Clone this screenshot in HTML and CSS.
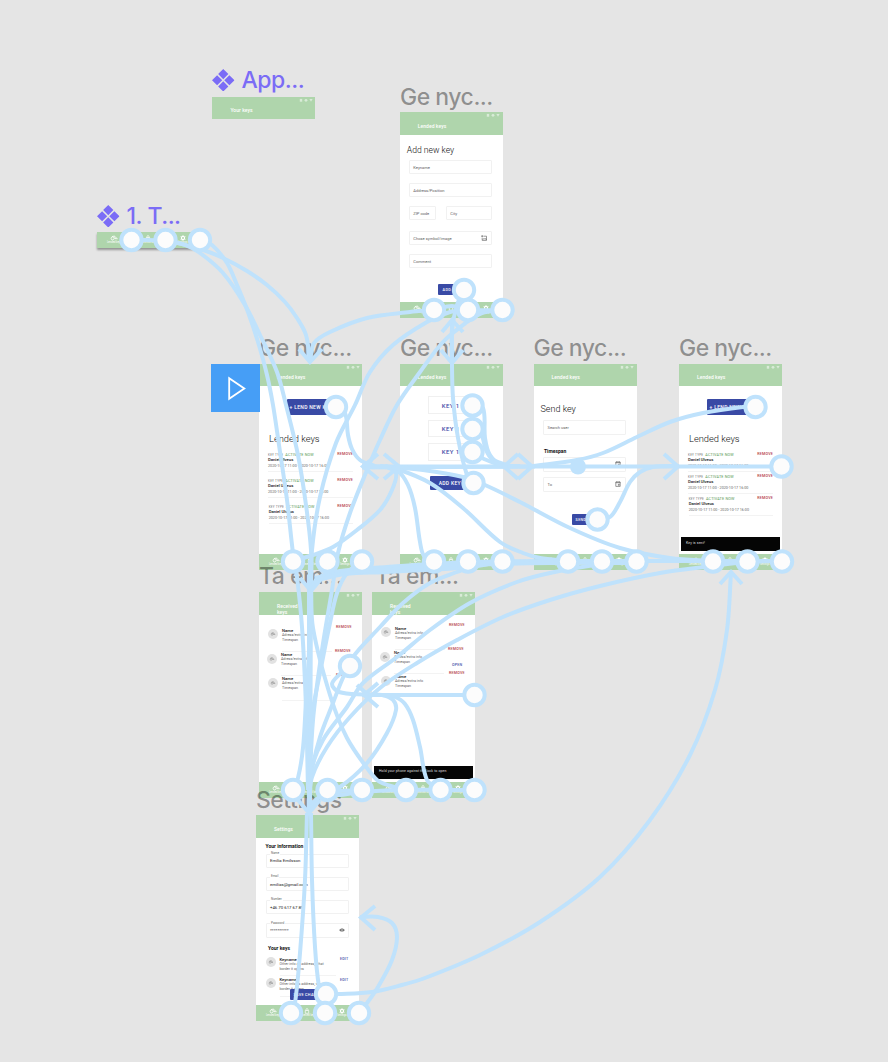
FILE: index.html
```html
<!DOCTYPE html>
<html lang="sv">
<head>
<meta charset="utf-8">
<title>Prototype canvas</title>
<link rel="stylesheet" href="styles.css">
</head>
<body>
<svg class="defs" width="0" height="0">
  <symbol id="status" viewBox="0 0 14 5"><rect x=".8" y=".9" width="2.400" height="2.800"/><circle cx="7" cy="2.300" r="1.400"/><path d="M10.400 1h3.200l-1.600 2.700z"/></symbol>
  <symbol id="key" viewBox="0 0 8 6"><circle cx="2.600" cy="3.400" r="1.500" fill="none" stroke="currentColor" stroke-width=".8"/><path d="M2 1.600L4.600 1l.6 1.200M4 3h3v1.300M5.700 3v1.200" fill="none" stroke="currentColor" stroke-width=".8"/></symbol>
  <symbol id="lock" viewBox="0 0 8 6"><path d="M2.300 2.500h3.400v2.800H2.300zM3 2.500V1.600a1 1 0 0 1 2 0v.9" fill="none" stroke="currentColor" stroke-width=".7"/></symbol>
  <symbol id="gear" viewBox="0 0 8 6"><circle cx="4" cy="3" r="1.600" fill="none" stroke="currentColor" stroke-width="1.200"/><path d="M4 .2v.8M4 5v.8M1.600 1.600l.5.5M6.400 1.600l-.5.5M1.600 4.400l.5-.5M6.400 4.400l-.5-.5" stroke="currentColor" stroke-width=".8"/></symbol>
  <symbol id="cal" viewBox="0 0 6 6"><path d="M.8 1h4.400v4.400H.8zM.8 1.700h4.400M1.800.3v.8M4.200.3v.8M3.300 3.300h1v1h-1z" fill="none" stroke="#555" stroke-width=".6"/></symbol>
  <symbol id="img" viewBox="0 0 6 6"><path d="M2.500 1.200h3v4.200H1.200V2.800M.2 1.200h2M1.200.2v2M1.800 4.800l1.200-1.500 1 1 .6-.8.800 1.300" fill="none" stroke="#555" stroke-width=".6"/></symbol>
  <symbol id="eye" viewBox="0 0 6 6"><path d="M.3 3C1.500.900 4.500.900 5.700 3 4.500 5.100 1.500 5.100.3 3z" fill="#555"/><circle cx="3" cy="3" r="1.100" fill="#555" stroke="#fff" stroke-width=".5"/></symbol>
  <symbol id="component" viewBox="0 0 22 22"><path d="M11 0l5 5-5 5-5-5zM11 12l5 5-5 5-5-5zM5 6l5 5-5 5-5-5zM17 6l5 5-5 5-5-5z" fill="#7b6cf6"/></symbol>
</svg>

<main class="canvas">
  <div class="comp at-app"><div class="bar"><svg class="status"><use href="#status"/></svg><b>Your keys</b></div></div>
  <div class="comp at-tab"><div class="nav"><i><svg><use href="#key"/></svg>Lended keys</i><i><svg><use href="#lock"/></svg>Received keys</i><i><svg><use href="#gear"/></svg>Settings</i></div></div>

  <section class="phone at-add">
    <div class="bar"><svg class="status"><use href="#status"/></svg><b>Lended keys</b></div>
    <div class="form">
      <h2>Add new key</h2>
      <div class="field">Keyname</div>
      <div class="field">Address/Position</div>
      <div class="pair"><div class="field zip">ZIP code</div><div class="field">City</div></div>
      <div class="field wide-gap">Chose symbol/image<svg><use href="#img"/></svg></div>
      <div class="field">Comment</div>
      <div class="btn small add-btn">ADD KEY</div>
    </div>
    <div class="nav"><i><svg><use href="#key"/></svg>Lended keys</i><i><svg><use href="#lock"/></svg>Received keys</i><i><svg><use href="#gear"/></svg>Settings</i></div>
  </section>

  <section class="phone at-lend">
    <div class="bar"><svg class="status"><use href="#status"/></svg><b>Lended keys</b></div>
    <div class="btn lend-btn">+ LEND NEW KEY</div>
    <h2 class="list-title">Lended keys</h2>
    <div class="rows">
      <div class="row"><p><small>KEY TYPE</small><em>ACTIVATE NOW</em><u>REMOVE</u></p><strong>Daniel Ulveus</strong><span>2020-10-17 11:00 - 2020-10-17 16:00</span></div>
      <div class="row"><p><small>KEY TYPE</small><em>ACTIVATE NOW</em><u>REMOVE</u></p><strong>Daniel Ulveus</strong><span>2020-10-17 11:00 - 2020-10-17 16:00</span></div>
      <div class="row shift"><p><small>KEY TYPE</small><em>ACTIVATE NOW</em><u>REMOVE</u></p><strong>Daniel Ulveus</strong><span>2020-10-17 11:00 - 2020-10-17 16:00</span></div>
    </div>
    <div class="nav"><i><svg><use href="#key"/></svg>Lended keys</i><i><svg><use href="#lock"/></svg>Received keys</i><i><svg><use href="#gear"/></svg>Settings</i></div>
  </section>

  <section class="phone at-pick">
    <div class="bar"><svg class="status"><use href="#status"/></svg><b>Lended keys</b></div>
    <div class="keys"><div>KEY 1</div><div>KEY 1</div><div>KEY 1</div></div>
    <div class="btn addkey-btn">ADD KEY</div>
    <div class="nav"><i><svg><use href="#key"/></svg>Lended keys</i><i><svg><use href="#lock"/></svg>Received keys</i><i><svg><use href="#gear"/></svg>Settings</i></div>
  </section>

  <section class="phone at-send">
    <div class="bar"><svg class="status"><use href="#status"/></svg><b>Lended keys</b></div>
    <div class="send">
      <h2>Send key</h2>
      <div class="field">Search user</div>
      <h3>Timespan</h3>
      <div class="field">From<svg><use href="#cal"/></svg></div>
      <div class="field to">To<svg><use href="#cal"/></svg></div>
      <div class="btn small send-btn">SEND</div>
    </div>
    <div class="nav"><i><svg><use href="#key"/></svg>Lended keys</i><i><svg><use href="#lock"/></svg>Received keys</i><i><svg><use href="#gear"/></svg>Settings</i></div>
  </section>

  <section class="phone at-sent">
    <div class="bar"><svg class="status"><use href="#status"/></svg><b>Lended keys</b></div>
    <div class="btn lend-btn">+ LEND NEW KEY</div>
    <h2 class="list-title">Lended keys</h2>
    <div class="rows tight">
      <div class="row"><p><small>KEY TYPE</small><em>ACTIVATE NOW</em><u>REMOVE</u></p><strong>Daniel Ulveus</strong><span>2020-10-17 11:00 - 2020-10-17 16:00</span></div>
      <div class="row"><p><small>KEY TYPE</small><em>ACTIVATE NOW</em><u>REMOVE</u></p><strong>Daniel Ulveus</strong><span>2020-10-17 11:00 - 2020-10-17 16:00</span></div>
      <div class="row shift"><p><small>KEY TYPE</small><em>ACTIVATE NOW</em><u>REMOVE</u></p><strong>Daniel Ulveus</strong><span>2020-10-17 11:00 - 2020-10-17 16:00</span></div>
    </div>
    <div class="snack">Key is sent!</div>
    <div class="nav"><i><svg><use href="#key"/></svg>Lended keys</i><i><svg><use href="#lock"/></svg>Received keys</i><i><svg><use href="#gear"/></svg>Settings</i></div>
  </section>

  <section class="phone at-recv">
    <div class="bar two"><svg class="status"><use href="#status"/></svg><b>Received<br>keys</b></div>
    <div class="people">
      <div class="person"><svg class="ava"><use href="#key"/></svg><p><strong>Name</strong><span>Adress/extra info</span><span>Timespan</span></p><u>REMOVE</u></div>
      <div class="person back"><svg class="ava"><use href="#key"/></svg><p><strong>Name</strong><span>Adress/extra info</span><span>Timespan</span></p><u>REMOVE</u></div>
      <div class="person"><svg class="ava"><use href="#key"/></svg><p><strong>Name</strong><span>Adress/extra info</span><span>Timespan</span></p><u>REMOVE</u></div>
    </div>
    <div class="nav"><i><svg><use href="#key"/></svg>Lended keys</i><i><svg><use href="#lock"/></svg>Received keys</i><i><svg><use href="#gear"/></svg>Settings</i></div>
  </section>

  <section class="phone at-open">
    <div class="bar two"><svg class="status"><use href="#status"/></svg><b>Received<br>keys</b></div>
    <div class="people raised">
      <div class="person"><svg class="ava"><use href="#key"/></svg><p><strong>Name</strong><span>Adress/extra info</span><span>Timespan</span></p><u>REMOVE</u></div>
      <div class="person back"><svg class="ava"><use href="#key"/></svg><p><strong>Name</strong><span>Adress/extra info</span><span>Timespan</span></p><u>REMOVE<a>OPEN</a></u></div>
      <div class="person plain"><svg class="ava"><use href="#key"/></svg><p><strong>Name</strong><span>Adress/extra info</span><span>Timespan</span></p><u>REMOVE</u></div>
    </div>
    <div class="snack">Hold your phone against the lock to open</div>
    <div class="nav"><i><svg><use href="#key"/></svg>Lended keys</i><i><svg><use href="#lock"/></svg>Received keys</i><i><svg><use href="#gear"/></svg>Settings</i></div>
  </section>

  <section class="phone at-set">
    <div class="bar"><svg class="status"><use href="#status"/></svg><b>Settings</b></div>
    <div class="info">
      <h3>Your information</h3>
      <div class="field val"><label>Name</label>Emilia Emilsson</div>
      <div class="field val"><label>Email</label>emilias@gmail.com</div>
      <div class="field val"><label>Number</label>+46 70 617 67 89</div>
      <div class="field val"><label>Password</label>**********<svg><use href="#eye"/></svg></div>
      <h3 class="sub">Your keys</h3>
      <div class="mine"><svg class="ava"><use href="#key"/></svg><p><strong>Keyname</strong><span>Other info as address, what<br>border it opens</span></p><a>EDIT</a></div>
      <div class="mine"><svg class="ava"><use href="#key"/></svg><p><strong>Keyname</strong><span>Other info as address, what<br>border it opens</span></p><a>EDIT</a></div>
    </div>
    <div class="btn small save-btn">SAVE CHANGES</div>
    <div class="nav"><i><svg><use href="#key"/></svg>Lended keys</i><i><svg><use href="#lock"/></svg>Received keys</i><i><svg><use href="#gear"/></svg>Settings</i></div>
  </section>

  <div class="title comp-title t-app"><svg><use href="#component"/></svg>App...</div>
  <div class="title comp-title t-tab"><svg><use href="#component"/></svg>1. T...</div>
  <div class="title t-add">Ge nyc...</div>
  <div class="title t-lend">Ge nyc...</div>
  <div class="title t-pick">Ge nyc...</div>
  <div class="title t-send">Ge nyc...</div>
  <div class="title t-sent">Ge nyc...</div>
  <div class="title t-recv">Ta em...</div>
  <div class="title t-open">Ta em...</div>
  <div class="title t-set">Settings</div>

  <div class="play"><svg viewBox="0 0 48 48"><path d="M18 14v20.500L33 24.300z" fill="none" stroke="#fff" stroke-width="1.800"/></svg></div>
  <svg class="flow" id="flow" viewBox="0 0 888 1062"></svg>
</main>
<script src="flow.js"></script>
</body>
</html>
```

FILE: flow.js
```js
// Connector routes, each a list of x,y points joined by a smooth curve.
const routes = [
  "131,240 166,241 200,249 223,258 247,271 267,285 285,302 297,318 306,335 310,362",
  "165,240 185,245 200,253 223,273 245,305 260,335 277,372 286,405 298,455 306,505 311,550 311,590",
  "200,240 212,245 227,263 237,285 248,312 258,342 267,375 273,405 279,445 287,500 293,553 297,577 302,627 306,707 308,790",
  "434,310 410,312 367,318 330,332 314,343 310,362",
  "464,290 457,305 452,330 452,362",
  "473,483 467,475 458,438 453,398 452,365 452,320",
  "468,310 450,312 427,322 393,345 370,372 355,405 336,443 320,497 312,550 311,590",
  "502,310 482,313 467,322 443,342 420,372 397,405 380,440 367,470 350,513 338,553 332,590 322,650 313,720 309,800",
  "336,407 345,413 348,435 352,449 360,460 375,466",
  "362,466.500 782,466.500", "362,467.500 535,466.500",
  "472,405 483,408 485,438 490,455 502,465 520,466", "472,429 481,434 486,450 492,459 506,465", "472,452 484,459 500,465",
  "362,466 390,467 423,470 463,477 485,485 520,502 570,528 620,548 670,558 713,561",
  "380,466 397,469 430,483 463,508 500,542 523,553 540,558 568,561",
  "385,466 397,470 408,485 415,508 420,542 424,556 434,561",
  "385,466 396,473 392,490 380,510 357,530 333,547 313,555 293,561",
  "755,407 743,407 703,413 670,422 637,437 603,453 577,460 533,466",
  "597,519 610,517 620,502 630,482 640,472 653,467 679,466",
  "782,561 568,561 470,562 387,567 340,571 318,578 311,590",
  "636,563 550,563 470,565 387,570 340,574 315,578",
  "502,561 470,567 387,572 345,574 318,580",
  "502,561 480,564 457,572 430,583 403,603 380,627 353,657 342,680 333,703 320,737 312,770 309,800",
  "636,561 602,564 550,573 517,582 470,603 430,630 397,657 363,683 347,707 323,740 310,773 309,800",
  "782,561 747,562 713,566 660,573 600,586 550,600 503,617 457,640 417,663 380,688 350,717 327,747 312,777 309,800",
  "362,561 347,573 337,593 330,623 320,673 311,723 309,800",
  "293,790 298,778 303,748 306,700 309,650 310,560",
  "406,790 380,782 370,772 347,738 330,695 313,628 311,585",
  "309,575 309,812", "311,590 310,812",
  "327,790 340,787 367,763 387,733 396,710 393,700 382,695 362,695",
  "440,790 427,780 420,747 413,720 405,704 395,697 383,695",
  "474,695 362,695", "350,666 340,674 332,684 339,692 367,695",
  "475,790 397,790 362,792 340,795 318,798 309,810", "362,790 327,793 312,803",
  "307,813 305,880 300,953 295,1003 291,1013",
  "311,813 312,880 315,947 319,987 325,1013",
  "326,994 338,994 372,992 402,985 425,978 480,955 540,922 600,877 650,820 690,755 715,690 727,630 731,573",
  "359,1013 367,1003 378,987 392,960 397,937 392,923 378,917 360,917",
  "434,310 452,306 468,310 502,310"
];
const heads = [
  "299,349 310,362 322,349", "442,332 452,320 463,332", "441,350 452,363 463,350",
  "378,454 363,466.500 378,479", "384,454 399,466.500 384,479", "518,454 504,466.500 518,479",
  "518,454 532,466.500 518,479", "664,454 678,466.500 664,479",
  "300,578 311,591 322,578", "298,800 309,813 320,800",
  "378,683 364,695 378,707", "357,685 368,695",
  "720,584 731,572 742,584", "375,906 361,917.500 375,930"
];
const nodes = [
  [131.5,240],[165.5,240],[200,240],[464,290],[434,310],[468,310],[502.5,310],
  [336,407],[293,561.5],[327.5,561.5],[362,561.5],[472.5,405.5],[472.5,429],[472.5,452],[473.5,483],
  [434,561.5],[468,561.5],[502.5,561.5],[597.5,519.5],[568,561.5],[602,561.5],[636.5,561.5],
  [755.5,407],[781.5,466.5],[713,561.5],[747.5,561.5],[782,561.5],
  [350,666],[293,790],[327.5,790],[362,790],[474.5,695],[406,790],[440.5,790],[474.5,790],
  [326,994],[291,1013],[325,1013],[359,1013]
];
const parse = s => s.split(" ").map(p => p.split(",").map(Number));
function smooth(p) {
  let d = "M" + p[0];
  for (let i = 0; i < p.length - 1; i++) {
    const a = p[i - 1] || p[i], b = p[i], c = p[i + 1], e = p[i + 2] || c;
    const len = (m, n) => Math.hypot(m[0] - n[0], m[1] - n[1]);
    const s = len(b, c), kb = s / (len(a, b) + s) / 1.5, kc = s / (len(c, e) + s) / 1.5;
    d += "C" + [b[0] + (c[0] - a[0]) * kb / 2, b[1] + (c[1] - a[1]) * kb / 2,
      c[0] - (e[0] - b[0]) * kc / 2, c[1] - (e[1] - b[1]) * kc / 2, c[0], c[1]].join(" ");
  }
  return d;
}
document.getElementById("flow").innerHTML =
  routes.map(r => `<path d="${smooth(parse(r))}"/>`).join("") +
  heads.map(h => `<polyline points="${h}"/>`).join("") +
  '<circle class="dot" cx="578" cy="466.5" r="8"/>' +
  nodes.map(n => `<circle cx="${n[0]}" cy="${n[1]}" r="10.200"/>`).join("");
```

FILE: styles.css
```css
* { box-sizing: border-box; }
body { margin: 0; background: #e5e5e5; font-family: Roboto, sans-serif; }
p, h2, h3 { margin: 0; }
.defs { position: absolute; }
.canvas { position: relative; width: 888px; height: 1062px; overflow: hidden; background: #e5e5e5; }
.flow { position: absolute; inset: 0; width: 888px; height: 1062px; fill: none; stroke: #bfe2fc; stroke-width: 4; }
.flow circle { fill: #fcfcfc; }
.flow .dot { fill: #bfe2fc; stroke: none; }

/* frame titles */
.title { position: absolute; font: 450 23px/30px Inter, sans-serif; letter-spacing: -.5px; color: rgba(0,0,0,.39); white-space: nowrap; }
.comp-title { display: flex; align-items: center; gap: 7px; color: #7b6cf6; }
.comp-title svg { width: 22.500px; height: 22.500px; }
.t-app { left: 212px; top: 65px; }
.t-tab { left: 97px; top: 201px; }
.t-add { left: 400px; top: 81.500px; }
.t-lend { left: 259px; top: 332.500px; }
.t-pick { left: 400px; top: 332.500px; }
.t-send { left: 533.5px; top: 332.500px; }
.t-sent { left: 679px; top: 332.500px; }
.t-recv { left: 259px; top: 561px; }
.t-open { left: 375px; top: 561px; }
.t-set { left: 256px; top: 784.500px; }
.play { position: absolute; left: 211px; top: 364px; width: 48.5px; height: 48px; background: #469ef6; }
.play svg { display: block; }

/* frames */
.phone { position: absolute; width: 103px; height: 206px; display: flex; flex-direction: column; background: #fff; overflow: hidden; }
.comp { position: absolute; width: 103px; }
.at-app { left: 212.4px; top: 96.500px; }
.at-tab { left: 97px; top: 232.4px; box-shadow: 0 1.5px 2px rgba(0,0,0,.35); }
.at-add { left: 399.8px; top: 112.4px; }
.at-lend { left: 259px; top: 363.600px; }
.at-pick { left: 399.8px; top: 363.600px; }
.at-send { left: 533.5px; top: 363.600px; }
.at-sent { left: 679px; top: 363.600px; }
.at-recv { left: 259px; top: 592px; }
.at-open { left: 372px; top: 592px; }
.at-set { left: 256px; top: 815px; }

.bar { flex: none; height: 22.8px; background: #afd5ac; color: #fff; display: flex; flex-direction: column; font-size: 5px; line-height: 6px; }
.status { width: 14px; height: 5px; margin: 1px 2.500px 0 auto; fill: #d9ebd8; }
.bar b { margin: 4.500px 0 0 18px; font-weight: 500; letter-spacing: .05px; }
.nav { flex: none; height: 16px; margin-top: auto; background: #afd5ac; color: #fff; display: flex; }
.nav i { flex: 1; display: flex; flex-direction: column; align-items: center; padding-top: 3px; font-style: normal; font-size: 2.6px; line-height: 3px; white-space: nowrap; }
.nav svg { width: 8px; height: 6px; }

h2 { font-weight: 300; font-size: 9.300px; line-height: 11px; color: #111; white-space: nowrap; }
h3 { font-weight: 700; font-size: 5px; line-height: 6px; color: #111; white-space: nowrap; }
.btn { flex: none; background: #394aa5; color: #fff; border-radius: 1px; font-weight: 500; font-size: 5px; letter-spacing: .3px; display: flex; align-items: center; justify-content: center; white-space: nowrap; }
.small { height: 10.5px; font-size: 3.8px; }
.field { display: flex; align-items: center; justify-content: space-between; height: 14.5px; padding: 0 3.500px; border: 1px solid #f1f1f1; border-radius: 1px; font-size: 4.050px; color: #666; white-space: nowrap; }
.field svg { width: 6px; height: 6px; }

.form { padding: 9.800px 11px 0 9px; display: flex; flex-direction: column; gap: 8.5px; }
.form h2 { margin: 0 0 -4.5px -2px; font-size: 8.600px; }
.pair { display: flex; gap: 9.5px; }
.pair .field { flex: 1; }
.pair .zip { flex: none; width: 27.5px; }
.form .wide-gap { margin-top: 2px; }
.form .add-btn { width: 27px; margin: 7.5px 0 0 29px; }

.lend-btn { width: 48px; height: 15.5px; margin: 13px 0 0 28px; }
.list-title { margin: 17.800px 0 0 10px; }
.rows { margin: 8.800px 9px 0 9px; }
.row { height: 26px; display: flex; flex-direction: column; }
.row::after { content: ""; width: 100%; height: 1px; margin-top: 1.500px; background: #f3f3f3; }
.row p { display: flex; align-items: center; gap: 2px; height: 5px; }
.row small { font-size: 3px; color: #777; letter-spacing: .25px; }
.row em { font-style: normal; font-size: 3.8px; color: #5b9a58; letter-spacing: .15px; }
.row strong { font-size: 4.2px; line-height: 6px; font-weight: 500; color: #111; }
.row span { font-size: 3.7px; line-height: 6px; color: #666; white-space: nowrap; }
.shift { padding-left: .7px; }
.tight .row { height: 22px; }
.tight .row::after { margin-top: 1.800px; }
u { text-decoration: none; margin-left: auto; font-size: 3.7px; line-height: 5px; font-weight: 500; color: #b43a45; letter-spacing: .2px; }
a { font-size: 3.7px; line-height: 5px; font-weight: 500; color: #4450a8; letter-spacing: .2px; }

.keys { margin: 9.800px 0 0 28.5px; width: 47px; display: flex; flex-direction: column; gap: 5.700px; }
.keys div { height: 17.7px; border: 1px solid #f0f0f0; display: flex; align-items: center; padding-left: 12.5px; font-size: 6px; font-weight: 500; color: #3f4da8; letter-spacing: .4px; }
.addkey-btn { width: 45px; height: 14px; margin: 15.200px 0 0 30px; padding-right: 5px; }

.send { padding: 18px 11px 0 9.5px; display: flex; flex-direction: column; }
.send h2 { margin: 0 0 4.800px -2.5px; font-size: 9px; }
.send h3 { margin: 13.500px 0 3px 1px; }
.send .to { margin-top: 5.5px; }
.send .send-btn { width: 27px; margin: 22.5px 0 0 28.5px; padding-right: 8px; }

.snack { margin: auto 2px 3px 2px; height: 13.5px; background: #050505; color: #ddd; display: flex; align-items: center; padding-left: 5px; padding-bottom: 2px; font-size: 3.5px; letter-spacing: .1px; }
.snack + .nav { margin-top: 0; }

.people { margin: 13px 8px 0 9px; }
.raised { margin-top: 11px; }
.person { display: flex; height: 24.300px; gap: 4px; }
.back { margin-left: -1px; margin-right: 1px; }
.ava { flex: none; width: 10px; height: 10px; border-radius: 50%; background: #e2e2e2; color: #888; padding: 2.300px; margin-top: 1.500px; }
.person p { flex: 1; display: flex; flex-direction: column; border-bottom: 1px solid #f3f3f3; }
.person strong, .mine strong { font-size: 4.200px; line-height: 5px; font-weight: 500; color: #111; }
.person span, .mine span { font-size: 3.650px; line-height: 5px; color: #666; white-space: nowrap; }
.person u { width: 18px; margin: -3px 0 0 0; display: flex; flex-direction: column; }
.person a { margin: 11px 0 0 4px; }
.plain p { border: 0; }

.info { padding: 5px 10px 0 9.500px; display: flex; flex-direction: column; }
.val { position: relative; margin-bottom: 8.700px; font-size: 4.300px; color: #222; }
.val label { position: absolute; top: -3.500px; left: 3.500px; padding: 0 1px; background: #fff; font-size: 3px; line-height: 5px; color: #666; }
.info h3 { margin-bottom: 4.800px; }
.info .sub { margin: -1.300px 0 4.500px 2.500px; }
.mine { display: flex; gap: 4px; height: 20.800px; margin-right: .5px; }
.mine p { flex: 1; display: flex; flex-direction: column; border-bottom: 1px solid #f3f3f3; }
.mine p { padding-top: 1px; }
.mine a { padding-top: 1.500px; }
.save-btn { position: absolute; left: 34px; top: 174px; width: 38px; }
```
